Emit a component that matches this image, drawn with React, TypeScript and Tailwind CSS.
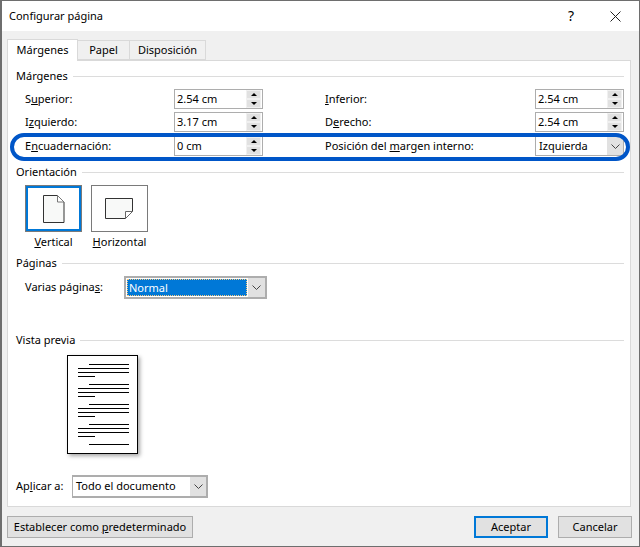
const font = "font-['Noto_Sans',sans-serif]";

function Section({ title, className }: { title: string; className?: string }) {
  return (
    <div className={`flex h-4 items-center gap-[5px] pl-[8px] pr-[6px] ${className ?? ""}`}>
      <span className="leading-4">{title}</span>
      <div className="h-px flex-1 bg-[#dcdcdc]" />
    </div>
  );
}

function Arrow({ up }: { up?: boolean }) {
  return (
    <div className="flex flex-1 items-center justify-center border border-[#f0f0f0] bg-[#e1e1e1]">
      <svg width="6" height="3" viewBox="0 0 6 3">
        <path d={up ? "M3 0L6 3H0Z" : "M0 0H6L3 3Z"} fill="#000" />
      </svg>
    </div>
  );
}

function Spin({ value }: { value: string }) {
  return (
    <div className="flex h-5 w-[89px] border border-[#adadad] bg-white">
      <span className="flex-1 pl-[2px] leading-[18px]">{value}</span>
      <div className="mr-px flex w-[15px] flex-col">
        <Arrow up />
        <Arrow />
      </div>
    </div>
  );
}

function Chevron() {
  return (
    <svg width="9" height="5" viewBox="0 0 9 5" fill="none" stroke="#444" strokeWidth="1">
      <path d="M0.5 0.5L4.5 4.5L8.5 0.5" />
    </svg>
  );
}

function Row({ left, value, right, rightControl, className }: {
  left: React.ReactNode;
  value: string;
  right: React.ReactNode;
  rightControl: React.ReactNode;
  className?: string;
}) {
  return (
    <div className={`flex h-5 items-center pl-[17px] ${className ?? ""}`}>
      <span className="w-[149px]">{left}</span>
      <Spin value={value} />
      <span className="ml-[62px] w-[210px]">{right}</span>
      {rightControl}
    </div>
  );
}

const previewLines = [
  "ml-[11px]", "", "", "w-[17px]",
  "ml-[11px]", "", "", "w-[17px]",
  "ml-[11px]", "", "", "w-[17px]",
  "ml-[11px]", "", "", "w-[17px]",
  "ml-[11px]",
];

export default function App() {
  return (
    <div className={`flex h-[547px] w-[640px] flex-col overflow-hidden border border-[#6e6e6e] border-l-2 bg-[#f0f0f0] text-[11px] text-black ${font}`}>
      <div className="flex h-[30px] shrink-0 items-center bg-white pl-[7px]">
        <span className="flex-1">Configurar página</span>
        <span className="mr-[36px] mb-[2px] text-[14px]">?</span>
        <svg className="mr-[18px]" width="11" height="11" viewBox="0 0 11 11" stroke="#222" strokeWidth="1">
          <path d="M0.5 0.5L10.5 10.5M10.5 0.5L0.5 10.5" />
        </svg>
      </div>

      <div className="flex h-[29px] shrink-0 items-end pl-[5px]">
        <div className="relative z-10 -mb-px flex h-[22px] w-[71px] items-center justify-center border border-b-0 border-[#d9d9d9] bg-white">Márgenes</div>
        <div className="flex h-5 w-[52px] items-center justify-center border border-l-0 border-[#d9d9d9]">Papel</div>
        <div className="flex h-5 w-[76px] items-center justify-center border border-l-0 border-[#d9d9d9]">Disposición</div>
      </div>

      <div className="relative ml-[5px] flex h-[447px] w-[624px] shrink-0 flex-col border border-[#d9d9d9] bg-white pt-[7px]">
        <Section title="Márgenes" />
        <Row className="mt-[5px]" left={<>S<u>u</u>perior:</>} value="2.54 cm" right={<><u>I</u>nferior:</>} rightControl={<Spin value="2.54 cm" />} />
        <Row className="mt-[3px]" left={<>I<u>z</u>quierdo:</>} value="3.17 cm" right={<>D<u>e</u>recho:</>} rightControl={<Spin value="2.54 cm" />} />
        <Row className="mt-[4px]" left={<>E<u>n</u>cuadernación:</>} value="0 cm" right={<>Posición del <u>m</u>argen interno:</>} rightControl={
          <div className="flex h-5 w-[89px] border border-[#adadad] bg-white">
            <span className="flex-1 pl-[3px] leading-[18px]">Izquierda</span>
            <div className="flex w-[16px] items-center justify-center bg-[#e1e1e1]"><Chevron /></div>
          </div>
        } />

        <Section title="Orientación" className="mt-[8px]" />
        <div className="mt-[5px] flex gap-[9px] pl-[17px]">
          <div className="w-[57px]">
            <div className="flex h-[47px] items-center justify-center border border-[#7a7a7a] bg-white shadow-[inset_0_0_0_2px_#0078d7]">
              <svg width="22" height="28" viewBox="0 0 22 28">
                <path d="M0.5 0.5H14.5L21 7V27.5H0.5Z" fill="#f8f9f8" stroke="#333" />
                <path d="M14.5 0.5V7H21Z" fill="#fff" stroke="#777" />
              </svg>
            </div>
            <div className="mt-[2px] text-center leading-4"><u>V</u>ertical</div>
          </div>
          <div className="w-[57px]">
            <div className="flex h-[47px] items-center justify-center border border-[#7a7a7a] bg-white">
              <svg width="29" height="21" viewBox="0 0 29 21">
                <path d="M0.5 0.5H27.5V13.5L20.5 20.5H0.5Z" fill="#f8f9f8" stroke="#333" />
                <path d="M20.5 13.5H27.5L20.5 20.5Z" fill="#fff" stroke="#666" />
              </svg>
            </div>
            <div className="mt-[2px] text-center leading-4 whitespace-nowrap"><u>H</u>orizontal</div>
          </div>
        </div>

        <Section title="Páginas" className="mt-[5px]" />
        <div className="mt-[5px] flex h-[23px] items-center pl-[17px]">
          <span className="w-[99px]">Varias página<u>s</u>:</span>
          <div className="flex h-[23px] w-[143px] border-2 border-[#adadad] bg-white">
            <div className="m-px flex-1 bg-[#0078d7] pl-[2px] leading-[17px] text-white outline-1 outline-dotted outline-[#f5c77e] -outline-offset-1">Normal</div>
            <div className="flex w-[17px] items-center justify-center bg-[#e1e1e1]"><Chevron /></div>
          </div>
        </div>

        <Section title="Vista previa" className="mt-[33px]" />
        <div className="ml-[59px] mt-[7px] flex h-[99px] w-[71px] flex-col gap-[3px] border border-black bg-white pr-[8px] pl-[10px] pt-[8px] shadow-[2px_2px_4px_rgba(0,0,0,0.35)]">
          {previewLines.map((c, i) => (
            <div key={i} className={`h-px shrink-0 bg-black ${c} ${i % 4 === 3 && i < 16 ? "mb-[4px]" : ""}`} />
          ))}
        </div>

        <div className="mt-[21px] flex h-[23px] items-center pl-[8px]">
          <span className="w-[56px]">Ap<u>l</u>icar a:</span>
          <div className="flex h-[23px] w-[136px] border-2 border-l border-[#adadad] bg-white">
            <span className="flex-1 pl-[3px] leading-[18px]">Todo el documento</span>
            <div className="flex w-[16px] items-center justify-center bg-[#e1e1e1]"><Chevron /></div>
          </div>
        </div>

        <div className="pointer-events-none absolute left-[2px] right-0 top-[72px] h-[28px] rounded-[14px] border-[4px] border-[#0056c8]" />
      </div>

      <div className="flex flex-1 items-center pl-[5px] pr-[7px] pt-[1px]">
        <button className="h-[22px] w-[186px] border border-[#adadad] bg-[#e1e1e1] whitespace-nowrap">Establecer como <u>p</u>redeterminado</button>
        <button className="ml-auto h-[22px] w-[74px] border-2 border-[#0078d7] bg-[#e1e1e1]">Aceptar</button>
        <button className="ml-[10px] h-[22px] w-[74px] border border-[#adadad] bg-[#e1e1e1]">Cancelar</button>
      </div>
    </div>
  );
}
